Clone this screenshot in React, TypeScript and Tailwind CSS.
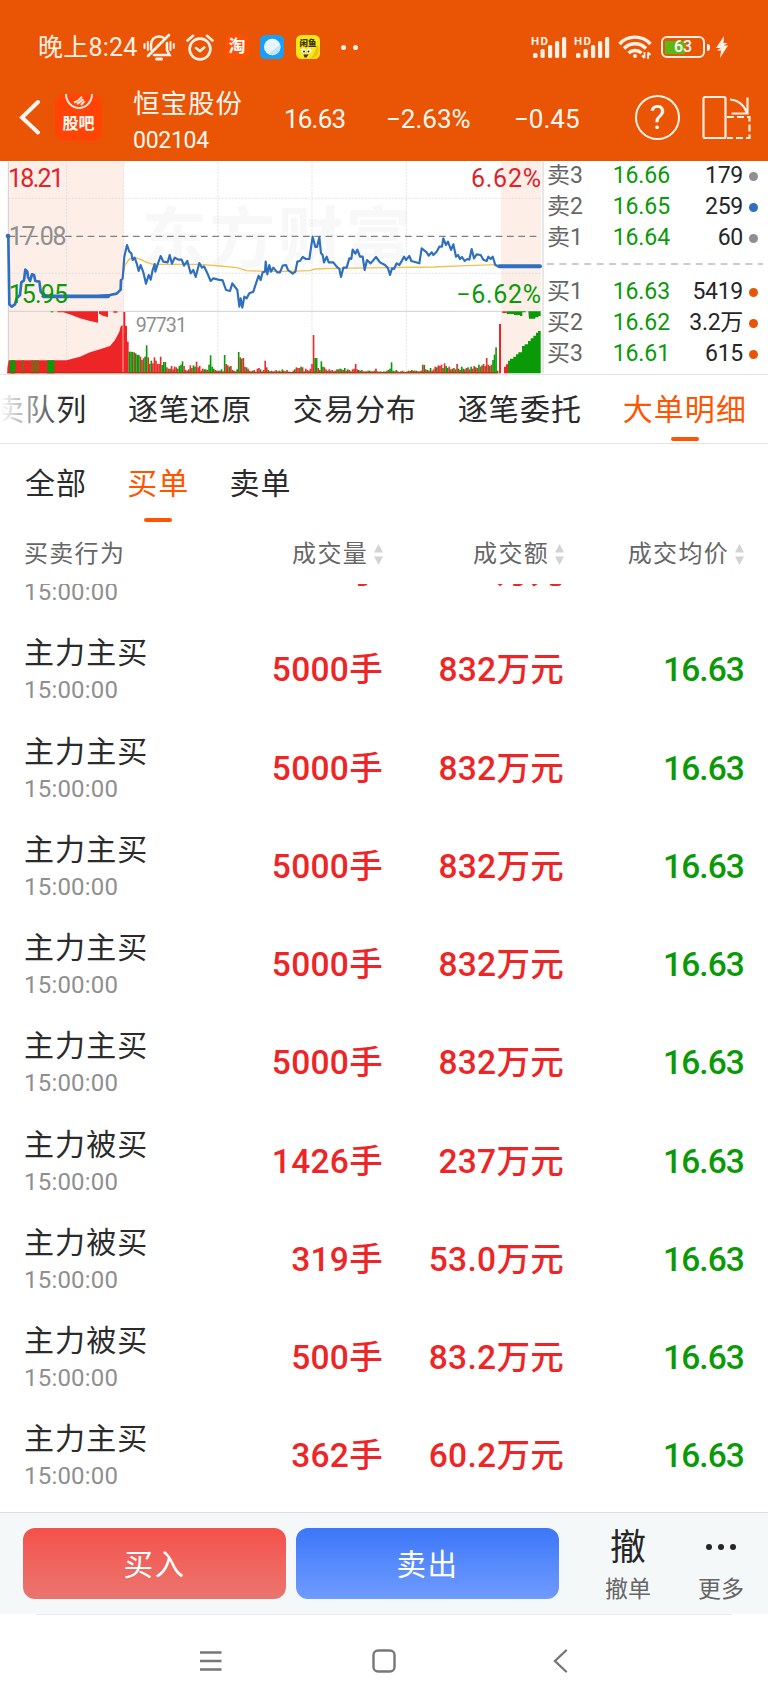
import clsx from "clsx"

interface Quote {
  label: string
  price: string
  volume: string
  dot: string
}

interface Order {
  action: string
  volume: string
  amount: string
}

const asks: Quote[] = [
  { label: "卖3", price: "16.66", volume: "179", dot: "bg-[#8e8e93]" },
  { label: "卖2", price: "16.65", volume: "259", dot: "bg-[#2f6fc0]" },
  { label: "卖1", price: "16.64", volume: "60", dot: "bg-[#8e8e93]" },
]

const bids: Quote[] = [
  { label: "买1", price: "16.63", volume: "5419", dot: "bg-[#e95504]" },
  { label: "买2", price: "16.62", volume: "3.2万", dot: "bg-[#e95504]" },
  { label: "买3", price: "16.61", volume: "615", dot: "bg-[#e95504]" },
]

const orders: Order[] = [
  { action: "主力主买", volume: "5000手", amount: "832万元" },
  { action: "主力主买", volume: "5000手", amount: "832万元" },
  { action: "主力主买", volume: "5000手", amount: "832万元" },
  { action: "主力主买", volume: "5000手", amount: "832万元" },
  { action: "主力主买", volume: "5000手", amount: "832万元" },
  { action: "主力主买", volume: "5000手", amount: "832万元" },
  { action: "主力被买", volume: "1426手", amount: "237万元" },
  { action: "主力被买", volume: "319手", amount: "53.0万元" },
  { action: "主力被买", volume: "500手", amount: "83.2万元" },
  { action: "主力主买", volume: "362手", amount: "60.2万元" },
]

const tabs = ["买卖队列", "逐笔还原", "交易分布", "逐笔委托", "大单明细"]

const auctionLine =
  "25,243 28,448 35,455 45,448 50,430 60,420 64,382 72,376 76,344 82,350 84,366 90,378 96,358 102,360 106,378 118,380 122,410 130,420 150,424 290,424 330,420 350,416 362,404 363,376"

const priceLine =
  "363,376 368,370 373,305 381,270 388,290 394,295 398,315 404,308 410,325 416,348 422,330 430,352 438,386 446,360 452,374 458,345 464,327 466,350 474,325 482,303 490,320 503,322 509,300 516,326 524,308 535,314 545,314 552,332 562,318 572,355 580,345 587,366 598,324 606,338 612,334 620,350 632,378 640,370 655,374 668,376 678,405 690,408 697,385 712,405 718,455 722,430 727,458 733,425 740,430 748,415 760,410 768,385 776,362 782,375 788,352 795,350 797,320 802,358 808,330 813,350 820,338 832,352 840,352 848,332 858,330 864,345 878,356 886,350 892,320 900,318 908,306 918,312 928,312 938,245 946,276 951,276 958,247 963,295 968,300 972,322 980,305 986,322 1000,322 1010,335 1018,342 1023,366 1030,338 1040,338 1048,310 1054,312 1058,284 1066,296 1072,284 1080,305 1088,305 1094,345 1101,315 1112,325 1128,306 1140,322 1155,330 1164,340 1170,360 1176,340 1182,342 1190,325 1198,330 1204,320 1212,305 1218,315 1228,303 1234,318 1258,325 1265,280 1280,292 1286,302 1295,292 1300,300 1310,290 1318,275 1326,275 1330,250 1338,270 1344,260 1353,285 1360,268 1368,305 1374,300 1380,312 1386,306 1394,318 1402,312 1408,314 1415,282 1422,310 1430,298 1442,300 1450,314 1460,318 1465,305 1472,312 1478,305 1486,330 1494,334"

const averageLine =
  "368,370 375,330 388,312 400,308 415,310 440,322 460,328 500,328 600,328 660,333 710,338 740,347 800,349 860,349 930,347 945,342 1000,340 1170,338 1300,336 1400,332 1490,329"

// bar heights per minute, negative means a falling minute
const minuteBars = [
  -65, -65, -64, 63, -60, -55, -55, 50, -40, 45, -50, -84, 48, 28, -38, 30, 48, 38, 28, 28, 50, -25, -34, -34, 18, 14,
  -14, 22, 12, 20, 18, -14, -22, -26, -36, 22, 10, 8, -12, 24, 16, -24, -20, 35, 18, 22, 8, 14, -12, -12, 10, -26, -54,
  -20, -14, 10, 8, -8, 8, -12, -6, -55, 28, 24, -20, 22, 10, -8, 6, -12, -64, 48, -44, 46, 20, -18, 14, 8, 6, -8, 10,
  -5, 14, 16, -12, 6, 10, 38, 18, -10, -6, 8, -6, 6, 10, -6, -8, 6, -12, 8, -6, 10, 5, -5, 4, 8, -12, 18, 16, 16, -20,
  18, -6, 14, 10, -8, 14, 28, 115, -46, -46, 16, 10, -36, -20, 18, 12, -8, 12, 8, 10, -6, 8, -12, 12, -14, -12, 10, -16,
  8, -12, 10, -6, 12, 14, 28, 12, -10, -8, 10, -6, 6, -6, 8, -8, -6, 6, 8, 14, -6, 5, -6, 4, -6, -5, 8, -10, -14, -33, -8,
  6, -10, 6, 4, -6, 8, 5, -4, -6, 8, -7, 10, -8, 8, -8, 6, -6, 8, 26, -25, 12, -10, 8, -16, 8, 12, 20, -18, 24, 22, 26, -16,
  30, -22, -16, 20, 12, -14, 16, -12, 28, -14, 10, -20, -14, 12, 16, -18, 12, -20, 14, 22, -18, 16, -26, 20, -24, 28, 22,
  46, 26, -22, 26, -40, -56, -78, -8,
]

function PriceChart() {
  return (
    <svg className="h-[213px] w-[545px] shrink-0" viewBox="0 21 1635 639" fontFamily="Roboto, sans-serif">
      <rect x="25" y="21" width="346" height="634" fill="#fdeee8" />
      <rect x="1503" y="21" width="120" height="634" fill="#fdeee8" />
      <text
        x="424"
        y="322"
        fontSize="198"
        fontWeight="700"
        fill="#f8f8f8"
        letterSpacing="6"
        fontFamily="'Noto Sans CJK SC', sans-serif"
      >
        东方财富
      </text>
      <g stroke="#dcdcdc" strokeWidth="2.5" strokeDasharray="6 4">
        <path d="M25 130H1623M25 355H1623M200 21V655M371 21V655M654 21V655M936 21V655M1219 21V655" />
      </g>
      <path d="M25 21V655M1629 21V655M25 469H1623" stroke="#d0d0d0" strokeWidth="3" />
      <path d="M25 244H1623" stroke="#808080" strokeWidth="3.5" strokeDasharray="20 14" />

      {/* auction volume */}
      <polygon
        points="22,655 22,640 26,616 200,616 240,605 270,592 300,583 330,573 345,555 358,530 362,514 368,510 368,655"
        fill="#ee2526"
      />
      <path d="M38 616V655M69 616V655M97 616V655M106 616V655M113 616V655" stroke="#5c7a12" strokeWidth="5" />
      <rect x="30" y="616" width="16" height="39" fill="#0a9a08" />
      <rect x="142" y="616" width="21" height="39" fill="#0a9a08" />
      <path d="M172 469H294V503L270 498L240 490L215 480L190 472H172zM297 469H324V486L310 483L297 476zM340 469H352V473H340z" fill="#ee2526" />
      <path d="M152 469H160V472H152z" fill="#0a9a08" />
      <path d="M370 471H376V655H370zM376 513H381V655H376zM381 560H386V655H381z" fill="#ee2526" />
      {minuteBars.map((value, index) => (
        <rect
          key={index}
          x={386 + index * 4.68}
          y={655 - Math.abs(value)}
          width="4.9"
          height={Math.abs(value)}
          fill={value > 0 ? "#e92c2c" : "#0a9a08"}
        />
      ))}
      <path d="M22 653H1494" stroke="#a33c14" strokeWidth="4" />
      <rect x="1497" y="507" width="6" height="148" fill="#ee2526" />
      <path d="M1512 655V635H1518V628H1524V655z" fill="#ee2526" />
      <path
        d="M1524 655V617H1530V611H1540V605H1548V598H1555V592H1566V573H1574V568H1584V558H1592V550H1600V542H1608V533H1614V528H1622V655z"
        fill="#0a9a08"
      />
      <path d="M1507 469H1520V474H1507z" fill="#ee2526" />
      <path d="M1520 469H1577V472H1567V483H1560V480H1542V477H1520zM1585 469H1622V483H1615V487H1606V491H1587z" fill="#0a9a08" />

      <g fontSize="75">
        <text x="24" y="96" fill="#e0232a" textLength="168">18.21</text>
        <text x="26" y="270" fill="#8f8f8f" textLength="174">17.08</text>
      </g>

      <g fill="none" strokeLinejoin="round" strokeLinecap="round">
        <polyline points={averageLine} stroke="#f0c050" strokeWidth="4" />
        <polyline points={auctionLine} stroke="#2f6fc0" strokeWidth="8" />
        <path d="M130 424H325" stroke="#2f6fc0" strokeWidth="11" />
        <polyline points={priceLine} stroke="#2f6fc0" strokeWidth="6.5" />
        <path d="M1498 334H1620" stroke="#2f6fc0" strokeWidth="12" />
      </g>
      <circle cx="24" cy="243" r="7" fill="#2f6fc0" />

      <g fontSize="75">
        <text x="26" y="444" fill="#0a9a08" textLength="178">15.95</text>
        <text x="1413" y="97" fill="#e0232a" textLength="210">6.62%</text>
        <text x="1369" y="445" fill="#0a9a08" textLength="254">−6.62%</text>
        <text x="407" y="530" fill="#8f8f8f" fontSize="59" textLength="154">97731</text>
      </g>
    </svg>
  )
}

function QuoteRow({ quote }: { quote: Quote }) {
  return (
    <div className="flex h-[31px] items-center text-[23px]">
      <span className="w-[46px] text-[#666]">{quote.label}</span>
      <span className="w-[77px] text-right tracking-[-0.1px] text-[#0a9a08]">{quote.price}</span>
      <span className="w-[73px] text-right tracking-[-0.3px] text-[#262626]">{quote.volume}</span>
      <span className={clsx("ml-[6px] size-[9px] rounded-full", quote.dot)} />
    </div>
  )
}

function SignalIcon() {
  return (
    <svg className="h-[24px] w-[36px]" viewBox="0 0 36 24" fill="#fff0e6">
      <text x="0" y="9.5" fontSize="11.5" fontWeight="700" textLength="17" fontFamily="Roboto, sans-serif">
        HD
      </text>
      <rect x="2" y="18" width="4.5" height="5" rx="1.5" />
      <rect x="9.5" y="14" width="4.2" height="9" rx="1.5" />
      <rect x="17" y="10" width="4.2" height="13" rx="1.5" />
      <rect x="24" y="6" width="4.2" height="17" rx="1.5" />
      <rect x="31" y="2" width="4.2" height="21" rx="1.5" />
    </svg>
  )
}

function StatusBar() {
  return (
    <div className="flex h-[94px] items-center pl-[38px]">
      <span className="w-[105px] whitespace-nowrap pt-[2px] text-[25px] tracking-[0.2px] text-[#fff0e6]">晚上8:24</span>
      <svg className="h-[28px] w-[32px]" viewBox="0 0 32 28" fill="none" stroke="#fff0e6" strokeWidth="2.6" strokeLinecap="round">
        <path d="M26 2L5 23M8 16.5V12C8 7 11 3.5 16 3.5C18 3.5 19.6 4 21 5M24 10V17L26.5 22H11" />
        <path d="M13.5 26H18.5" strokeWidth="3" />
        <path d="M1.5 11V15M4.8 9V17M27.5 9V17M30.8 11V15" strokeWidth="2" />
      </svg>
      <svg className="ml-[11px] h-[27px] w-[28px]" viewBox="0 0 28 27" fill="none" stroke="#fff0e6" strokeWidth="2.6" strokeLinecap="round">
        <circle cx="14" cy="15" r="10.4" />
        <path d="M1.5 6.5L7 1.8M26.5 6.5L21 1.8M10 14L14 17L18.2 13.5" />
      </svg>
      <span className="ml-[11px] flex size-[24px] items-center justify-center rounded-[6px] bg-[#ff5000] text-[17px] font-bold text-white">
        淘
      </span>
      <svg className="ml-[11px] size-[24px]" viewBox="0 0 24 24">
        <rect width="24" height="24" rx="5.5" fill="#18a0f8" />
        <circle cx="12.3" cy="12" r="8.3" fill="#e8f7ff" />
        <path d="M20 9.5A8.3 8.3 0 0 1 8 19z" fill="#c3e4fa" />
      </svg>
      <svg className="ml-[12px] size-[24px]" viewBox="0 0 24 24">
        <rect width="24" height="24" rx="5.5" fill="#f7e71c" />
        <path d="M14 24C22 23 24 16 22 11C19 12 20 19 14 24z" fill="#fbbb10" />
        <text x="3.5" y="10.5" fontSize="8.5" fontWeight="900" fill="#3a3200" fontFamily="'Noto Sans CJK SC', sans-serif">
          闲鱼
        </text>
        <circle cx="7.5" cy="16" r="2.4" fill="#fff" />
        <circle cx="13" cy="16" r="2.4" fill="#fff" />
        <circle cx="8" cy="16.5" r="1" fill="#222" />
        <circle cx="12.5" cy="16.5" r="1" fill="#222" />
        <path d="M7.5 19.5H12.5L10.5 22.5H8.5z" fill="#5a2410" />
      </svg>
      <span className="ml-[21px] size-[5px] rounded-full bg-[#fff0e6]" />
      <span className="ml-[7px] size-[5px] rounded-full bg-[#fff0e6]" />
      <div className="ml-[173px] flex items-center gap-[7px]">
        <SignalIcon />
        <SignalIcon />
      </div>
      <svg className="ml-[8px] h-[26px] w-[34px]" viewBox="0 0 34 26" fill="none" stroke="#fff0e6" strokeWidth="3.4">
        <path d="M1.5 10A21 21 0 0 1 32.5 10M6 14.5A15 15 0 0 1 28 14.5M10.5 19A9.5 9.5 0 0 1 23.5 19" />
        <circle cx="17" cy="22" r="2" fill="#fff0e6" stroke="none" />
        <path d="M26.5 24V18M30 18.5V25M26.5 24L24 21.5M30 18.5L32.5 21" strokeWidth="1.8" />
      </svg>
      <div className="ml-[9px] flex h-[22px] w-[44px] items-center justify-center rounded-[6px] border-[2.5px] border-[#fff0e6] bg-[linear-gradient(90deg,#5cb812_56%,transparent_56%)] bg-[length:36px_13px] bg-center bg-no-repeat text-[16px] font-medium leading-none text-white">
        63
      </div>
      <span className="ml-[2px] h-[7px] w-[2.5px] rounded-r bg-[#fff0e6]" />
      <svg className="ml-[6px] h-[22px] w-[12px]" viewBox="0 0 12 22" fill="#fff0e6">
        <path d="M8 0L0 12H4.5L1 14.5H5L4 22L12 9.5H7.8L11.5 7H7.5z" />
      </svg>
    </div>
  )
}

function StockHeader() {
  return (
    <div className="flex h-[67px] text-[#fff8f2]">
      <svg className="ml-[18px] mt-[5px] h-[36px] w-[24px]" viewBox="0 0 24 36" fill="none" stroke="#fff8f2" strokeWidth="4" strokeLinecap="round">
        <path d="M20 3L4 18.5L20 33.5" />
      </svg>
      <div className="ml-[13px] flex h-[47px] w-[47px] flex-col items-center rounded-[10px] bg-[#ff4405]">
        <svg className="h-[17px] w-[28px] shrink-0" viewBox="0 0 28 17" fill="none" stroke="#ffe6dc" strokeWidth="2">
          <path d="M1 0A13 14 0 0 0 27 0" />
          <path d="M9 8.5Q14 7 17 2.5M12 10Q16 8 18 5M16 11L19.5 7" />
        </svg>
        <span className="mt-[4px] text-[16px] font-bold leading-[18px]">股吧</span>
      </div>
      <div className="ml-[31px] w-[118px]">
        <p className="-mt-[5px] whitespace-nowrap text-[26.5px] leading-[30px] tracking-[1px]">恒宝股份</p>
        <p className="mt-[11px] text-[23px] leading-[22px] tracking-[-0.3px]">002104</p>
      </div>
      <div className="mt-[10px] flex text-[26px] leading-[30px]">
        <span className="ml-[33px] w-[102px] tracking-[-0.8px]">16.63</span>
        <span className="w-[128px]">−2.63%</span>
        <span className="w-[121px]">−0.45</span>
      </div>
      <span className="mt-[1px] flex size-[45px] items-center justify-center rounded-full border-2 border-[#fff0e6] text-[33px] leading-none">
        ?
      </span>
      <svg className="ml-[22px] mt-[1px] h-[45px] w-[50px]" viewBox="0 0 50 45" fill="none" stroke="#fff0e6" strokeWidth="2.2">
        <rect x="1.5" y="2" width="22" height="41" rx="1.5" />
        <path d="M28 4.5C36 5 42 10 45 18M45.5 2.5V18.5H29.5" />
        <path d="M25 22H47.5V43H25" strokeDasharray="7 3" />
      </svg>
    </div>
  )
}

function SortArrows() {
  return (
    <svg className="ml-[6px] h-[21px] w-[9px]" viewBox="0 0 9 21" fill="#d3d3d3">
      <path d="M4.5 0L9 8.5H0zM0 12.5H9L4.5 21z" />
    </svg>
  )
}

function ColumnTitle({ title }: { title: string }) {
  return (
    <div className="flex items-center justify-end whitespace-nowrap">
      {title}
      <SortArrows />
    </div>
  )
}

function OrderRow({ order }: { order: Order }) {
  return (
    <div className="grid h-[98.25px] grid-cols-[179px_180px_181px_180px] items-center pl-[24px]">
      <div>
        <p className="text-[30px] leading-[36px] tracking-[1.1px] text-[#2b2b2b]">{order.action}</p>
        <p className="mt-[4px] text-[24px] leading-[30px] tracking-[0.2px] text-[#8f8f8f]">15:00:00</p>
      </div>
      <p className="text-right text-[33.5px] font-medium tracking-[0.3px] text-[#ee2526]">{order.volume}</p>
      <p className="text-right text-[33.5px] font-medium tracking-[0.3px] text-[#ee2526]">{order.amount}</p>
      <p className="text-right text-[33.5px] font-medium tracking-[-0.9px] text-[#0a9a08]">16.63</p>
    </div>
  )
}

export default function App() {
  return (
    <div className="flex h-[1707px] w-[768px] flex-col overflow-hidden bg-white font-[Roboto,'Noto_Sans_CJK_SC',sans-serif]">
      <header className="h-[161px] shrink-0 bg-[#e95504]">
        <StatusBar />
        <StockHeader />
      </header>

      <section className="flex h-[214px] shrink-0 border-b border-[#e3e3e3] pt-px">
        <PriceChart />
        <div className="flex-1 pl-[2px]">
          <div className="-mt-[1px]">
            {asks.map((quote) => (
              <QuoteRow key={quote.label} quote={quote} />
            ))}
          </div>
          <svg className="mb-[11px] mt-[8px] h-[4px] w-[216px]" viewBox="0 0 216 4">
            <path d="M0 2H216" stroke="#999" strokeWidth="1.2" strokeDasharray="7 5.4" />
          </svg>
          {bids.map((quote) => (
            <QuoteRow key={quote.label} quote={quote} />
          ))}
        </div>
      </section>

      <nav className="relative flex h-[69px] shrink-0 gap-[40.5px] overflow-hidden border-b border-[#e3e3e3] text-[30px] tracking-[1.1px] text-[#2b2b2b]">
        {tabs.map((tab, index) => (
          <button
            key={tab}
            className={clsx(
              "relative shrink-0 leading-[70px]",
              index === 0 && "-ml-[37px]",
              index === tabs.length - 1 && "text-[#ff5500]",
            )}
          >
            {tab}
            {index === tabs.length - 1 && (
              <span className="absolute bottom-[2px] left-[48px] h-[4px] w-[28px] rounded-full bg-[#ff5500]" />
            )}
          </button>
        ))}
        <span className="absolute left-0 top-0 h-full w-[66px] bg-gradient-to-r from-white to-transparent" />
      </nav>

      <nav className="flex h-[78px] shrink-0 gap-[40px] pl-[25px] text-[30px] tracking-[1.1px] text-[#2b2b2b]">
        <button className="leading-[79px]">全部</button>
        <button className="relative leading-[79px] text-[#ff5500]">
          买单
          <span className="absolute bottom-0 left-[17px] h-[4px] w-[28px] rounded-full bg-[#ff5500]" />
        </button>
        <button className="leading-[79px]">卖单</button>
      </nav>

      <div className="grid h-[62px] shrink-0 grid-cols-[179px_180px_181px_180px] items-center pl-[24px] pt-[2px] text-[24px] tracking-[1.3px] text-[#666]">
        <span>买卖行为</span>
        <ColumnTitle title="成交量" />
        <ColumnTitle title="成交额" />
        <ColumnTitle title="成交均价" />
      </div>

      <main className="h-[928px] shrink-0 overflow-hidden">
        <div className="-mt-[61px]">
          {orders.map((order, index) => (
            <OrderRow key={index} order={order} />
          ))}
        </div>
      </main>

      <footer className="flex h-[102px] shrink-0 border-t border-[#dcdee0] bg-[#f5f8f9] pl-[23px] pt-[15px]">
        <button className="h-[71px] w-[263px] rounded-[12px] bg-gradient-to-b from-[#f4504a] to-[#ea756f] pt-[4px] text-[29.5px] tracking-[1.5px] text-white">
          买入
        </button>
        <button className="ml-[10px] h-[71px] w-[263px] rounded-[12px] bg-gradient-to-b from-[#3b77f8] to-[#709bff] pt-[4px] text-[29.5px] tracking-[1.5px] text-white">
          卖出
        </button>
        <div className="ml-[39px] flex w-[60px] flex-col items-center">
          <span className="mt-[2px] text-[36px] leading-[36px] text-[#262626]">撤</span>
          <span className="mt-[12px] text-[23px] leading-[24px] text-[#666]">撤单</span>
        </div>
        <div className="ml-[33px] flex w-[60px] flex-col items-center">
          <div className="mt-[1px] flex h-[36px] items-center gap-[6px]">
            <span className="size-[6px] rounded-full bg-[#262626]" />
            <span className="size-[6px] rounded-full bg-[#262626]" />
            <span className="size-[6px] rounded-full bg-[#262626]" />
          </div>
          <span className="mt-[13px] text-[23px] leading-[24px] text-[#666]">更多</span>
        </div>
      </footer>

      <div className="mx-[36px] h-px shrink-0 bg-[#ececec]" />
      <div className="flex h-[92px] shrink-0 items-start pl-[199px] pt-[34px]">
        <svg className="h-[24px] w-[24px]" viewBox="0 0 24 24" stroke="#777" strokeWidth="2.4">
          <path d="M1 3.5H22.5M1 12H22.5M1 20.5H22.5" />
        </svg>
        <svg className="ml-[149px] h-[24px] w-[24px]" viewBox="0 0 24 24" fill="none" stroke="#777" strokeWidth="2.4">
          <rect x="1.5" y="1.5" width="21" height="21" rx="4.5" />
        </svg>
        <svg className="ml-[157px] h-[24px] w-[15px]" viewBox="0 0 15 24" fill="none" stroke="#777" strokeWidth="2.4" strokeLinecap="round">
          <path d="M13 1.5L2 12L13 22.5" />
        </svg>
      </div>
    </div>
  )
}
